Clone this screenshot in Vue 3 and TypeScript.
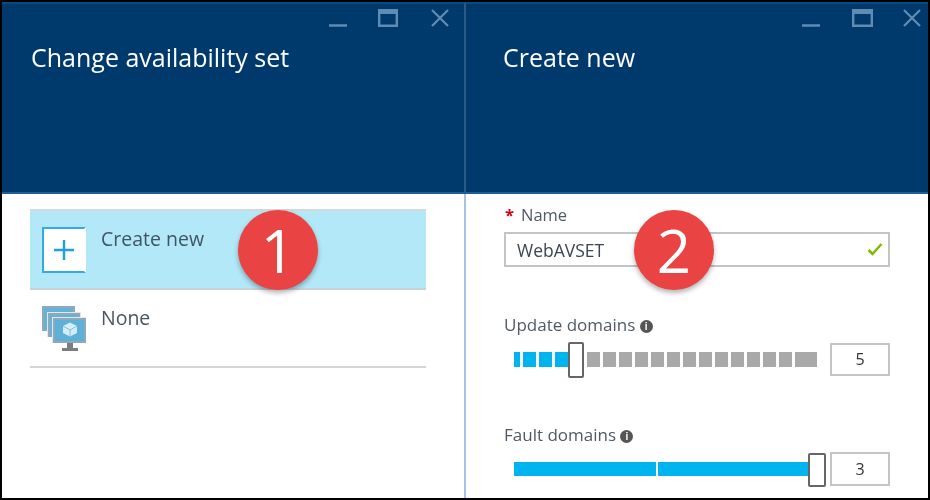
<script setup lang="ts">
const updateSegments = Array.from({ length: 18 }, (_, i) => i);
const blades = ["Change availability set", "Create new"];
</script>

<template>
	<div class="frame">
		<section class="blade blade--left">
			<header class="blade__head">
				<div class="controls">
					<svg width="18" height="20" viewBox="0 0 18 20"><path d="M0 16.500h18" stroke="#5f8cb3" stroke-width="2.500" /></svg>
					<svg width="20" height="18" viewBox="0 0 20 18"><path d="M1.200 1.200h17.600v15.600H1.200z" fill="none" stroke="#5f8cb3" stroke-width="2.400" /><path d="M1 3.500h18" stroke="#5f8cb3" stroke-width="3" /></svg>
					<svg class="close" width="18" height="18" viewBox="0 0 18 18"><path d="M1 1l16 16M17 1L1 17" stroke="#5f8cb3" stroke-width="2.200" /></svg>
				</div>
				<h1>{{ blades[0] }}</h1>
			</header>
			<div class="blade__body list">
				<div class="row row--active">
					<div class="plus">
						<svg width="22" height="20" viewBox="0 0 22 20"><path d="M11 0v20M1 10h20" stroke="#1f9fe0" stroke-width="2.400" /></svg>
					</div>
					<span>Create new</span>
				</div>
				<div class="row">
					<svg class="vm" width="44" height="46" viewBox="0 0 44 46">
						<rect x="0" y="1" width="33" height="25" fill="#8fa9ba" />
						<rect x="2" y="3" width="29" height="21" fill="#63b2d8" />
						<rect x="5" y="7" width="34" height="25" fill="#dfe9ef" />
						<rect x="6" y="8" width="32" height="24" fill="#8fa9ba" />
						<rect x="8" y="10" width="28" height="20" fill="#63b2d8" />
						<rect x="10" y="12" width="34" height="26" fill="#dfe9ef" />
						<rect x="11" y="13" width="33" height="25" fill="#8fa9ba" />
						<rect x="13" y="15" width="29" height="21" fill="#5eb0d9" />
						<path d="M28 17.500l7 3.500v7l-7 3.500-7-3.500v-7z" fill="#d6edf8" />
						<path d="M28 25v6.500M21 21l7 4 7-4" fill="none" stroke="#7cc0e2" />
						<path d="M25 38h6v5h5v3H20v-3h5z" fill="#7d7d7d" />
					</svg>
					<span>None</span>
				</div>
				<div class="badge badge--one">1</div>
			</div>
		</section>

		<section class="blade">
			<header class="blade__head">
				<div class="controls controls--right">
					<svg width="18" height="20" viewBox="0 0 18 20"><path d="M0 16.500h18" stroke="#5f8cb3" stroke-width="2.500" /></svg>
					<svg width="21" height="18" viewBox="0 0 21 18"><path d="M1.200 1.200h18.600v15.600H1.200z" fill="none" stroke="#5f8cb3" stroke-width="2.400" /><path d="M1 3.500h19" stroke="#5f8cb3" stroke-width="3" /></svg>
					<svg class="close" width="18" height="18" viewBox="0 0 18 18"><path d="M1 1l16 16M17 1L1 17" stroke="#5f8cb3" stroke-width="2.200" /></svg>
				</div>
				<h1 class="title--right">{{ blades[1] }}</h1>
			</header>
			<div class="blade__body form">
				<label class="label label--name"><em>*</em>Name</label>
				<div class="input">
					<span>WebAVSET</span>
					<svg width="16" height="13" viewBox="0 0 16 13"><path d="M1.500 7l4 4 9-10" fill="none" stroke="#7fba00" stroke-width="2.500" /></svg>
				</div>

				<label class="label label--update">Update domains <i class="info">i</i></label>
				<div class="slider">
					<div class="track">
						<div v-for="n in updateSegments" :key="n" :class="['seg', { 'seg--on': n < 4, 'seg--last': n === 17 }]"></div>
						<div class="thumb thumb--update"></div>
					</div>
					<div class="value">5</div>
				</div>

				<label class="label label--fault">Fault domains <i class="info">i</i></label>
				<div class="slider slider--fault">
					<div class="track track--fault">
						<div class="bar bar--first"></div>
						<div class="bar"></div>
						<div class="thumb thumb--fault"></div>
					</div>
					<div class="value value--fault">3</div>
				</div>

				<div class="badge badge--two">2</div>
			</div>
		</section>
	</div>
</template>

<style scoped>
.frame {
	width: 930px;
	height: 500px;
	box-sizing: border-box;
	border: 2px solid #000;
	display: flex;
	background: #fff;
	font-family: "Open Sans", "Liberation Sans", sans-serif;
	color: #4a5560;
	overflow: hidden;
	filter: blur(0.5px);
}
.blade {
	flex: 1;
	min-width: 0;
	display: flex;
	flex-direction: column;
}
.blade--left {
	flex: 0 0 464px;
}
.blade__head {
	height: 192px;
	flex: none;
	box-sizing: border-box;
	background: #003a6c;
	border-top: 2px solid #0a4a80;
	border-bottom: 2px solid #1d5e96;
	color: #fff;
}
.blade--left .blade__head {
	border-right: 2px solid #2a5a88;
}
.controls {
	display: flex;
	justify-content: flex-end;
	gap: 31px;
	padding: 5px 15px 0 0;
	align-items: flex-start;
}
.controls .close {
	margin-left: 2px;
}
.controls--right {
	gap: 32px;
	padding-right: 7px;
}
.controls--right .close {
	margin-left: -2px;
}
.blade__head h1 {
	margin: 11px 0 0 29px;
	font-size: 25px;
	font-weight: 400;
	line-height: 34px;
}
.blade__head h1.title--right {
	margin-left: 37px;
}
.blade__body {
	flex: 1;
	position: relative;
}
.list {
	padding: 15px 38px 0 28px;
	border-right: 2px solid #a9c3e6;
}
.row {
	height: 76px;
	display: flex;
	align-items: flex-start;
	gap: 15px;
	border-bottom: 2px solid #d6d6d6;
	padding-left: 12px;
	font-size: 19.500px;
	line-height: 24px;
}
.row--active {
	height: 77px;
	background: #b3e8f8;
	border-top: 2px solid #d0d8dc;
	border-bottom: 2px solid #c6d4da;
	color: #3f5566;
}
.row span {
	padding-top: 16px;
}
.plus {
	width: 40px;
	height: 42px;
	margin-top: 16px;
	border: 2px solid #34a9e6;
	border-right-color: #fff;
	background: #fff;
	display: flex;
	align-items: center;
	justify-content: center;
}
.vm {
	margin-top: 15px;
}
.badge {
	position: absolute;
	width: 80px;
	height: 80px;
	border-radius: 50%;
	background: #e94343;
	color: #fff;
	font-size: 60px;
	line-height: 80px;
	text-align: center;
	box-shadow: 0 3px 5px rgba(0, 0, 0, 0.3);
}
.badge--one {
	left: 236px;
	top: 16px;
}
.badge--two {
	left: 168px;
	top: 16px;
}
.form {
	padding: 11px 38px 0 38px;
}
.label {
	display: block;
	font-size: 17px;
	line-height: 20px;
	color: #4f5a64;
}
.label--name {
	font-size: 16.500px;
}
.label em {
	color: #d0021b;
	font-style: normal;
	font-weight: 700;
	margin-right: 7px;
	margin-left: 1px;
}
.input {
	height: 35px;
	box-sizing: border-box;
	margin-top: 7px;
	border: 2px solid #c4c4c4;
	display: flex;
	align-items: center;
	justify-content: space-between;
	padding: 0 5px 0 11px;
	font-size: 17.500px;
	color: #3c4650;
}
.label--update {
	margin-top: 48px;
}
.slider {
	display: flex;
	align-items: center;
	justify-content: space-between;
	margin-top: 6px;
	height: 36px;
}
.track {
	position: relative;
	margin-left: 10px;
	width: 304px;
	height: 15px;
	display: flex;
	gap: 3px;
}
.seg {
	width: 13px;
	background: #a9a9a9;
}
.seg--on {
	background: #00b4f0;
}
.seg:first-child {
	width: 6px;
}
.seg:nth-child(5) {
	margin-left: 16px;
}
.seg--last {
	width: 22px;
}
.thumb {
	position: absolute;
	width: 16px;
	background: #fff;
	border: 2px solid #666;
	border-radius: 2px;
	box-sizing: border-box;
}
.thumb--update {
	left: 54px;
	top: -10px;
	height: 36px;
}
.value {
	width: 60px;
	height: 33px;
	box-sizing: border-box;
	border: 2px solid #c4c4c4;
	text-align: center;
	font-size: 16px;
	line-height: 29px;
	color: #333;
}
.info {
	display: inline-block;
	width: 13px;
	height: 13px;
	border-radius: 50%;
	background: #555;
	color: #fff;
	font: 700 10px/13px "Liberation Sans", sans-serif;
	text-align: center;
	vertical-align: 1px;
}
.label--fault {
	margin-top: 48px;
}
.slider--fault {
	margin-top: 6px;
}
.track--fault {
	width: 294px;
	height: 14px;
	gap: 2px;
}
.bar {
	flex: 1;
	background: #00b4f0;
}
.bar--first {
	flex: 0 0 142px;
}
.thumb--fault {
	left: 294px;
	top: -9px;
	height: 34px;
	width: 18px;
}
.value--fault {
	height: 34px;
	line-height: 30px;
}
</style>

<style>
html,
body {
	margin: 0;
	background: #fff;
}
</style>
